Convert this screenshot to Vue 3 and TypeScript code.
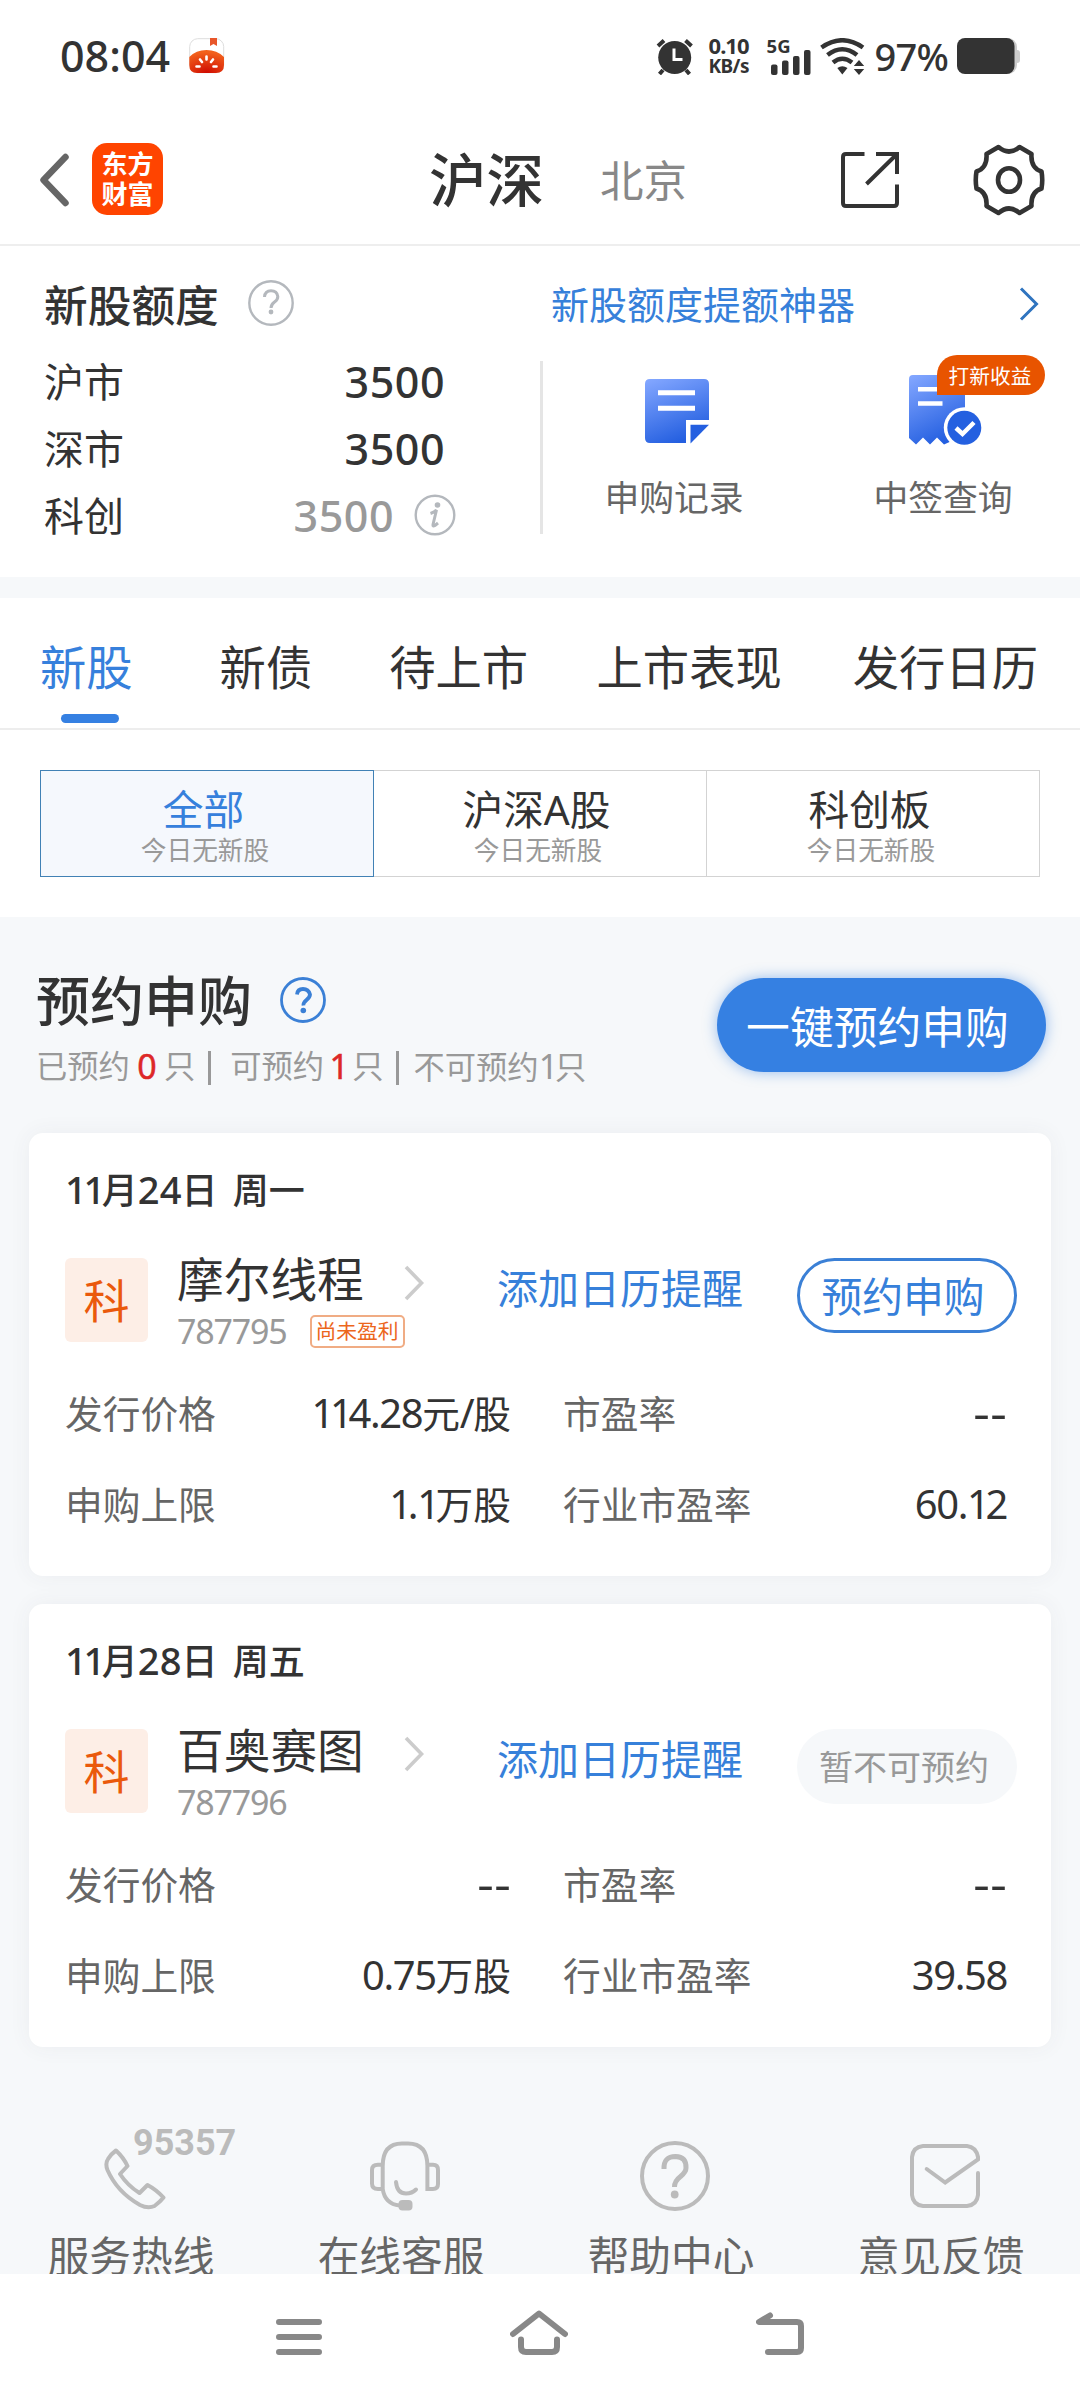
<script setup lang="ts">
import { h, type FunctionalComponent } from 'vue'

interface Stock {
  date: string
  name: string
  code: string
  tag?: string
  bookable: boolean
  price: string
  limit: string
  pe: string
  industryPe: string
}

const quotas = [
  { label: '沪市', value: '3500', muted: false },
  { label: '深市', value: '3500', muted: false },
  { label: '科创', value: '3500', muted: true },
]

const tabs = ['新股', '新债', '待上市', '上市表现', '发行日历']
const segments = ['全部', '沪深A股', '科创板']

const stocks: Stock[] = [
  {
    date: '11月24日 周一', name: '摩尔线程', code: '787795', tag: '尚未盈利', bookable: true,
    price: '114.28元/股', limit: '1.1万股', pe: '--', industryPe: '60.12',
  },
  {
    date: '11月28日 周五', name: '百奥赛图', code: '787796', bookable: false,
    price: '--', limit: '0.75万股', pe: '--', industryPe: '39.58',
  },
]

// Splits a mixed string so numerals can be sized and spaced apart from the Chinese text.
const Mixed: FunctionalComponent<{ text: string }> = (props) =>
  h('span', { class: 'mixed' },
    props.text.split(/(1|-+|[02-9]+|[./])/).filter(Boolean).map((part) => {
      if (part === '1') return h('span', { class: 'num one' }, part)
      if (/^-/.test(part)) return h('span', { class: 'num dash' }, part)
      if (/^[\d./]/.test(part)) return h('span', { class: 'num' }, part)
      return part
    }))
Mixed.props = ['text']
</script>

<template>
  <div class="screen">
    <div class="status">
      <span class="clock">08:04</span>
      <svg class="app-icon" width="36" height="36" viewBox="0 0 36 36">
        <defs>
          <radialGradient id="tomato" cx="50%" cy="100%" r="90%">
            <stop offset="0" stop-color="#cf0a00" /><stop offset="1" stop-color="#f2601c" />
          </radialGradient>
        </defs>
        <rect x=".7" y=".7" width="34" height="34" rx="8" fill="#fff" stroke="#ddd" />
        <path d="M21 0h7v8l-3.5-2L21 8z" fill="#e8562a" />
        <path d="M.3 19Q7 12 17.5 12T35 19v8q0 8-8 8H8q-7.700 0-7.700-8z" fill="url(#tomato)" />
        <path d="M17.500 18.500v3M11 21.500l2 2.500M24 21.500l-2 2.500M7.500 28.500h3M24.500 28.500h3" stroke="#fff" stroke-width="2.600" stroke-linecap="round" />
      </svg>
      <div class="status-right">
        <svg width="38" height="37" viewBox="0 0 38 37">
          <circle cx="18.700" cy="19.500" r="16.500" fill="#333" />
          <path d="M2 8l6-5.500M29.500 2.500l6 5.500M7 32l-3.500 4M30 32l3.500 4" stroke="#333" stroke-width="4" />
          <path d="M18 10.500v11h8.500" stroke="#fff" stroke-width="3" fill="none" />
        </svg>
        <div class="speed"><b>0.10</b><b class="unit">KB/s</b></div>
        <div class="cell">
          <b>5G</b>
          <svg width="42" height="26" viewBox="0 0 42 26">
            <rect x="2" y="15.500" width="6.500" height="10.500" rx="2" fill="#333" />
            <rect x="13" y="11.500" width="6.500" height="14.500" rx="2" fill="#333" />
            <rect x="24" y="7" width="6.500" height="19" rx="2" fill="#333" />
            <rect x="35" y="1" width="6.500" height="25" rx="2" fill="#333" />
          </svg>
        </div>
        <svg class="wifi" width="46" height="37" viewBox="0 0 46 37">
          <g fill="none" stroke="#333" stroke-width="4.500">
            <path d="M1.500 9.500Q22.300-5 43 9.500" /><path d="M7.500 17Q22.300 5.500 37 17" /><path d="M13 24.500Q22.300 17 32 24.500" />
          </g>
          <path d="M17.300 30Q22.300 26.500 27.500 30L22.300 36.500zM33.800 28L39 22l5.200 6zM33.800 31l5.200 6 5.200-6z" fill="#333" />
        </svg>
        <span class="percent">97%</span>
        <svg width="64" height="37" viewBox="0 0 64 37">
          <rect x="5" width="55" height="36" rx="9" fill="#ccc" /><rect x="57" y="12" width="6" height="13" rx="3" fill="#ccc" />
          <rect width="57.500" height="36" rx="8" fill="#333" />
        </svg>
      </div>
    </div>

    <header class="header">
      <svg class="back" width="32" height="54" viewBox="0 0 32 54">
        <path d="M27.500 4L5.500 27l22 23" fill="none" stroke="#666" stroke-width="6.500" stroke-linecap="round" stroke-linejoin="round" />
      </svg>
      <div class="logo"><span>东方</span><span>财富</span></div>
      <strong class="market on">沪深</strong>
      <span class="market">北京</span>
      <svg class="share" width="58" height="58" viewBox="0 0 58 58" fill="none" stroke="#333" stroke-width="4">
        <path d="M23.500 3H5Q2 3 2 6V52Q2 55 5 55H53Q56 55 56 52V33.500M35 3H56V23M25.500 33L55 4" />
      </svg>
      <svg width="72" height="72" viewBox="-36 -36 72 72" fill="none" stroke="#333" stroke-width="4.600" stroke-linejoin="round">
        <path d="M-10.500-33Q0-24 10.500-33L22.500-26Q21.500-12 32.500-8.500Q34 0 32.500 8.500Q21.500 12 22.500 26L10.500 33Q0 24-10.500 33L-22.500 26Q-21.500 12-32.500 8.500Q-34 0-32.500-8.500Q-21.500-12-22.500-26Z" />
        <ellipse rx="11" ry="11.800" />
      </svg>
    </header>

    <section class="quota">
      <div class="quota-left">
        <div class="quota-title">
          <span>新股额度</span>
          <svg width="46" height="46" viewBox="0 0 46 46" fill="none" stroke="#b4b8bd">
            <circle cx="23" cy="23" r="21.700" stroke-width="2.400" />
            <path d="M16.500 17Q17 10.800 23 10.800T29.800 16.500Q30 19.500 26.500 22T23 28" stroke-width="3" />
            <circle cx="23" cy="32" r="2.400" fill="#b4b8bd" stroke="none" />
          </svg>
        </div>
        <div v-for="q in quotas" :key="q.label" class="quota-row">
          <span class="quota-name">{{ q.label }}</span>
          <span :class="['quota-value', { muted: q.muted }]">{{ q.value }}</span>
          <svg v-if="q.muted" class="info" width="42" height="42" viewBox="0 0 42 42">
            <circle cx="21" cy="21" r="19.300" fill="none" stroke="#b4b8bd" stroke-width="2.400" />
            <circle cx="23.500" cy="11" r="2.800" fill="#b4b8bd" />
            <path d="M16.500 19.500Q21 18 22.500 16L19 30.500Q18.500 33 21 31.500L24 29" fill="none" stroke="#b4b8bd" stroke-width="3" />
          </svg>
        </div>
      </div>
      <div class="quota-right">
        <div class="quota-link">
          <span>新股额度提额神器</span>
          <svg width="20" height="34" viewBox="0 0 20 34"><path d="M2 1.500L17.500 17L2 32.500" fill="none" stroke="#2f74bf" stroke-width="3" /></svg>
        </div>
        <div class="actions">
          <div class="action">
            <svg width="72" height="70" viewBox="-4 -4 72 70">
              <defs>
                <linearGradient id="sheet" x1="0.100" y1="0" x2="0.500" y2="1">
                  <stop offset="0" stop-color="#82a6ff" /><stop offset="1" stop-color="#245fe0" />
                </linearGradient>
              </defs>
              <path d="M5 0H59Q64 0 64 5V41H41V64H5Q0 64 0 59V5Q0 0 5 0Z" fill="url(#sheet)" />
              <path d="M45.500 45.700H64L45.500 64.500Z" fill="#245fe0" />
              <path d="M13 13.700H50M13 29.300H50" stroke="#fff" stroke-width="5" />
            </svg>
            <span>申购记录</span>
          </div>
          <div class="action second">
            <svg width="74" height="70" viewBox="0 0 74 70">
              <path d="M4 0H52Q56 0 56 4V60L35 69.500L28 62.500L21 69.500L14 62.500L7 69.500L0 63V4Q0 0 4 0Z" fill="url(#sheet)" />
              <path d="M9 14.200H33.500M9 28.500H33.500" stroke="#fff" stroke-width="4.600" />
              <circle cx="55.300" cy="52.700" r="20.500" fill="#fff" />
              <circle cx="55.300" cy="52.700" r="17" fill="#2460e0" />
              <path d="M47 53L53.500 59L65 47.500" fill="none" stroke="#fff" stroke-width="4.500" />
            </svg>
            <span>中签查询</span>
            <em class="badge">打新收益</em>
          </div>
        </div>
      </div>
    </section>

    <nav class="tabs">
      <span v-for="(t, i) in tabs" :key="t" :class="['tab', { on: i === 0 }]">{{ t }}</span>
    </nav>

    <div class="segments">
      <div v-for="(s, i) in segments" :key="s" :class="['segment', { on: i === 0 }]">
        <span>{{ s }}</span><small>今日无新股</small>
      </div>
    </div>

    <main class="body">
      <div class="booking">
        <div>
          <div class="booking-title">
            <span>预约申购</span>
            <svg width="46" height="46" viewBox="0 0 46 46" fill="none" stroke="#3b80d6">
              <circle cx="23" cy="23" r="21.500" stroke-width="2.800" />
              <path d="M17 17.500Q17.500 12 23 12T30 17.500Q30 20 26.500 23T23.500 28.500" stroke-width="3.800" />
              <circle cx="23.300" cy="33.500" r="2.800" fill="#3b80d6" stroke="none" />
            </svg>
          </div>
          <div class="booking-stat">
            <span>已预约</span><b class="zero">0</b><span>只</span><i></i>
            <span class="mid">可预约</span><b class="single">1</b><span>只</span><i></i>
            <span class="last">不可预约<u>1</u>只</span>
          </div>
        </div>
        <button class="primary">一键预约申购</button>
      </div>

      <article v-for="s in stocks" :key="s.code" class="card">
        <div class="date"><Mixed :text="s.date" /></div>
        <div class="stock">
          <div class="board">科</div>
          <div class="identity">
            <div class="name">
              {{ s.name }}
              <svg width="22" height="36" viewBox="0 0 22 36"><path d="M3 2L18.500 18L3 34" fill="none" stroke="#ccc" stroke-width="3.600" /></svg>
            </div>
            <div class="code">{{ s.code }}<span v-if="s.tag" class="tag">{{ s.tag }}</span></div>
          </div>
          <a class="remind">添加日历提醒</a>
          <button :class="['book', { off: !s.bookable }]">{{ s.bookable ? '预约申购' : '暂不可预约' }}</button>
        </div>
        <dl class="facts">
          <dt>发行价格</dt><dd><Mixed :text="s.price" /></dd>
          <dt>市盈率</dt><dd><Mixed :text="s.pe" /></dd>
          <dt>申购上限</dt><dd><Mixed :text="s.limit" /></dd>
          <dt>行业市盈率</dt><dd><Mixed :text="s.industryPe" /></dd>
        </dl>
      </article>

      <footer class="services">
        <div class="service">
          <svg width="70" height="70" viewBox="-4 -7 70 70" fill="none" stroke="#bbb" stroke-width="4" stroke-linejoin="round">
            <path d="M12 2.500Q19.500 9.500 23.500 18L16 26Q23.500 37.500 35.500 45L43.500 37Q52 41.500 59.500 49.500Q56 54 50.500 58Q44 61 36 57Q13 44 3.500 22Q1 15.500 4 11Q7 6 12 2.500Z" />
          </svg>
          <span>服务热线</span>
          <b class="hotline">95357</b>
        </div>
        <div class="service">
          <svg width="70" height="70" viewBox="0 0 70 70" fill="none" stroke="#bbb" stroke-width="4">
            <path d="M12.700 23.700H8Q2 23.700 2 29V42.500Q2 48 8 48H12.700V25Q12.700 2.500 32 2.500H38Q57.400 2.500 57.400 25V48H63Q68 48 68 43V29Q68 23.700 63 23.700H57.400M12.700 48Q15 63 29.500 64.500" />
            <path d="M26 41Q27 52.500 36 52.500Q42 52.500 46 48.500" stroke-linecap="round" />
            <rect x="28.500" y="59" width="14" height="10.500" rx="4" fill="#bbb" stroke="none" />
          </svg>
          <span>在线客服</span>
        </div>
        <div class="service">
          <svg width="70" height="70" viewBox="0 0 70 70" fill="none" stroke="#bbb">
            <circle cx="35" cy="35" r="33" stroke-width="4" />
            <path d="M24 28Q23.500 15.500 35.500 15.500Q46.500 16 46 27Q46 31 40.500 35.500Q34.500 40 34.500 46" stroke-width="5" />
            <circle cx="34.700" cy="53.500" r="3.900" fill="#bbb" stroke="none" />
          </svg>
          <span>帮助中心</span>
        </div>
        <div class="service">
          <svg width="70" height="70" viewBox="0 -3 70 70" fill="none" stroke="#bbb" stroke-width="4" stroke-linecap="round">
            <path d="M68 29V51Q67 61 57 62H13Q3 61 2 51V13Q3 3 13 2H57Q66 3 68 13V15.500L35.200 38.500L16.700 25" />
          </svg>
          <span>意见反馈</span>
        </div>
      </footer>
    </main>

    <div class="navbar">
      <svg width="46" height="46" viewBox="0 0 46 46" stroke="#888" stroke-width="6" stroke-linecap="round">
        <path d="M3 13H43M3 28H43M3 43H43" />
      </svg>
      <svg width="58" height="46" viewBox="0 0 58 46" fill="none" stroke="#888" stroke-width="6" stroke-linecap="round" stroke-linejoin="round">
        <path d="M3 25L29 4.500L55 25M11 30.500V38Q11 43 16 43H42Q47 43 47 38V30.500" />
      </svg>
      <svg width="50" height="46" viewBox="0 0 50 46" fill="none" stroke="#888" stroke-width="6" stroke-linecap="round" stroke-linejoin="round">
        <path d="M14 6.500L3 13H41Q45 13 45 17V39Q45 43 41 43H12" />
      </svg>
    </div>
  </div>
</template>

<style>
body { margin: 0; background: #fff; }
.mixed .num { font-size: 1.060em; letter-spacing: -0.035em; }
.mixed .one { letter-spacing: -0.110em; }
.mixed .dash { font-family: "Noto Sans CJK SC", sans-serif; font-size: 1.300em; letter-spacing: 0; }
</style>

<style scoped>
.screen {
  width: 1080px; height: 2400px; overflow: hidden; display: flex; flex-direction: column;
  background: #fff; color: #333;
  font-family: "Noto Sans", "Noto Sans CJK SC", sans-serif;
  white-space: nowrap;
}
.screen svg { display: block; flex: none; }
button { font-family: inherit; padding: 0; margin: 0; border: 0; }

.status { height: 112px; flex: none; display: flex; align-items: center; padding: 0 59px 0 60px; box-sizing: border-box; }
.clock { width: 129px; font-size: 43px; line-height: 50px; font-weight: 500; }
.status-right { margin-left: auto; display: flex; align-items: center; height: 38px; }
.speed { display: flex; flex-direction: column; width: 60px; margin-left: 15px; margin-top: -3px; }
.speed b { font-size: 22px; line-height: 20px; font-weight: 700; letter-spacing: -1px; }
.speed .unit { font-size: 19px; line-height: 18px; margin-top: 2px; letter-spacing: -0.600px; }
.cell { display: flex; flex-direction: column; width: 53px; margin-left: -2px; }
.cell svg { margin-left: 2px; margin-top: -6px; }
.cell b { font-size: 18.500px; line-height: 18px; font-weight: 700; }
.percent { font-size: 38px; line-height: 38px; font-weight: 500; margin: 0 9px 0 9px; letter-spacing: -0.800px; }

.header { height: 134px; flex: none; box-sizing: border-box; padding: 3px 35px 0 38px; display: flex; align-items: center; border-bottom: 2px solid #eee; }
.logo {
  width: 71px; height: 72px; margin-left: 22px; margin-top: -2px; border-radius: 15px; background: #f40; color: #fff;
  display: flex; flex-direction: column; align-items: center; justify-content: center;
  font-weight: 700; font-size: 26px; line-height: 30px;
}
.market { width: 98px; color: #888; font-size: 43.500px; line-height: 60px; margin-left: 55px; }
.market.on { width: 116px; margin-left: 266px; color: #333; font-size: 57.500px; font-weight: 500; }
.share { margin: 0 74px 0 auto; }

.quota { height: 331px; flex: none; display: flex; border-bottom: 21px solid #f6f8fa; }
.quota-left { width: 540px; padding: 29px 0 0 44px; box-sizing: border-box; }
.quota-title { height: 60px; display: flex; align-items: center; font-size: 43.700px; font-weight: 500; line-height: 60px; margin-bottom: 13px; }
.quota-title svg { margin: -4px 0 0 29px; }
.quota-row { height: 67.300px; display: flex; align-items: center; font-size: 40px; line-height: 60px; }
.quota-name { width: 240px; }
.quota-value { width: 161px; text-align: right; font-size: 43px; font-weight: 500; letter-spacing: 0.500px; }
.quota-value.muted { width: 110px; color: #999; }
.info { margin: -3px 0 0 20px; }
.quota-right { width: 540px; padding-top: 28px; box-sizing: border-box; }
.quota-link { height: 60px; display: flex; align-items: center; justify-content: space-between; padding: 0 41px 0 11px; color: #3680da; font-size: 38px; line-height: 60px; }
.actions { height: 173px; margin-top: 27px; border-left: 3px solid #e5e5e5; display: flex; }
.action { position: relative; width: 268px; padding-top: 14px; box-sizing: border-box; display: flex; flex-direction: column; align-items: center; color: #666; font-size: 34.800px; }
.action span { line-height: 50px; margin: 28px 6px 0 0; }
.action.second svg { margin-left: 2px; }
.action.second span { margin-right: 4px; }
.badge {
  position: absolute; left: 126px; top: -6px; width: 108px; height: 40px; line-height: 42px; border-radius: 20px 20px 20px 0;
  background: #e85400; color: #fff; font-style: normal; font-size: 20.700px; text-align: center; text-indent: -2px;
}

.tabs { height: 132px; flex: none; box-sizing: border-box; display: flex; justify-content: flex-start; padding: 0 40px; border-bottom: 2px solid #ededed; font-size: 46.300px; line-height: 139px; }
.tab { position: relative; }
.tab + .tab { margin-left: 87px; }
.tab:nth-child(3) { margin-left: 77px; }
.tab:nth-child(4) { margin-left: 68.500px; }
.tab:nth-child(5) { margin-left: 71px; }
.tab.on { color: #3680dc; }
.tab.on::after { content: ""; position: absolute; left: 21px; top: 116px; width: 58px; height: 9px; border-radius: 5px; background: #3580e2; }

.segments { flex: none; display: flex; padding: 40px 40px; }
.segment { flex: 1; height: 107px; box-sizing: border-box; border: 1px solid #d3d3d3; border-left: 0; display: flex; flex-direction: column; align-items: center; padding-right: 4px; }
.segment.on { border: 1px solid #4181b5; background: #f5f8fd; color: #3680dc; }
.segment span { font-size: 40.700px; line-height: 44px; margin: 16px 3px 0 0; }
.segment small { font-size: 25.700px; line-height: 34px; margin-top: 3px; color: #999; }

.body { height: 1357px; flex: none; overflow: hidden; background: #f6f8fa; padding: 0 29px; box-sizing: border-box; }
.booking { height: 216px; display: flex; justify-content: space-between; padding: 0 5px 0 7px; }
.booking-title { height: 60px; margin-top: 54px; display: flex; align-items: center; font-size: 54px; line-height: 60px; font-weight: 500; }
.booking-title svg { margin: -3px 0 0 28px; }
.booking-stat { height: 40px; margin-top: 15px; display: flex; align-items: center; color: #999; font-size: 31.300px; line-height: 40px; }
.booking-stat b { color: #dd2828; font-size: 34px; font-weight: 400; text-align: center; -webkit-text-stroke: 0.500px; }
.booking-stat .zero { width: 34px; }
.booking-stat .single { width: 28px; text-indent: 2px; }
.booking-stat i { width: 3px; height: 34px; background: #999; margin: 3px 0 0 13px; }
.booking-stat .mid { margin-left: 19px; }
.booking-stat .last { margin-left: 14px; }
.booking-stat u { text-decoration: none; font-size: 34px; letter-spacing: -3px; }
.primary { width: 329px; height: 94px; margin-top: 61px; border-radius: 47px; background: #3580e2; color: #fff; font-size: 43.800px; line-height: 98px; padding-right: 8px; box-shadow: 0 0 14px rgba(53, 128, 226, 0.500); }

.card { height: 443px; margin-bottom: 28px; box-sizing: border-box; border-radius: 14px; background: #fff; padding: 35px 44px 0 36px; box-shadow: 0 0 22px rgba(60, 70, 90, 0.060); }
.date { font-size: 36px; line-height: 42px; font-weight: 500; word-spacing: 6px; }
.date :deep(.num) { letter-spacing: 0; }
.date :deep(.one) { letter-spacing: -0.090em; }
.stock { height: 84px; margin: 46px -10px 0 0; display: flex; }
.board { width: 83px; height: 84px; flex: none; border-radius: 6px; background: #fdeee6; color: #ea590c; font-size: 46px; line-height: 84px; text-align: center; }
.identity { width: 320px; flex: none; margin-left: 29px; display: flex; flex-direction: column; }
.name { height: 48px; margin-top: -3px; display: flex; align-items: center; gap: 39px; font-size: 46.700px; line-height: 48px; }
.name svg { margin-top: 7px; }
.code { height: 40px; margin-top: 8px; display: flex; align-items: center; font-size: 34px; line-height: 40px; letter-spacing: -1.200px; color: #999; }
.tag { margin-left: 23px; width: 95px; height: 33px; box-sizing: border-box; border: 2px solid #f0ac84; border-radius: 5px; font-size: 20.800px; line-height: 29px; text-align: center; letter-spacing: 0; color: #ec661c; }
.remind { width: 300px; flex: none; font-size: 41px; line-height: 61px; color: #3680da; }
.book { width: 220px; height: 75px; flex: none; box-sizing: border-box; border: 3px solid #3b80d6; border-radius: 38px; background: #fff; color: #3680da; font-size: 40.800px; line-height: 71px; padding-right: 8px; }
.book.off { border-color: #f6f8fa; background: #f6f8fa; color: #999; font-size: 34px; padding-right: 6px; }
.facts { margin: 26px 0 0; display: grid; grid-template-columns: 170px 276px 241px 1fr; grid-auto-rows: 91.200px; align-items: center; font-size: 37.700px; line-height: 54px; }
.facts dt { color: #666; }
.facts dt:nth-of-type(even) { padding-left: 52px; }
.facts dd { margin: 0; text-align: right; }

.services { display: flex; margin: 94px -29px 0; }
.service { position: relative; width: 270px; display: flex; flex-direction: column; align-items: center; }
.service span { font-size: 41.700px; line-height: 50px; color: #666; margin: 20px 8px 0 0; }
.hotline { position: absolute; left: 133px; top: -16px; font-family: Roboto, sans-serif; font-size: 36px; line-height: 36px; font-weight: 700; color: #bbb; letter-spacing: 0; }

.navbar { height: 126px; flex: none; display: flex; justify-content: center; background: #fff; padding-top: 35px; box-sizing: border-box; gap: 188px; padding-left: 2px; }
</style>
